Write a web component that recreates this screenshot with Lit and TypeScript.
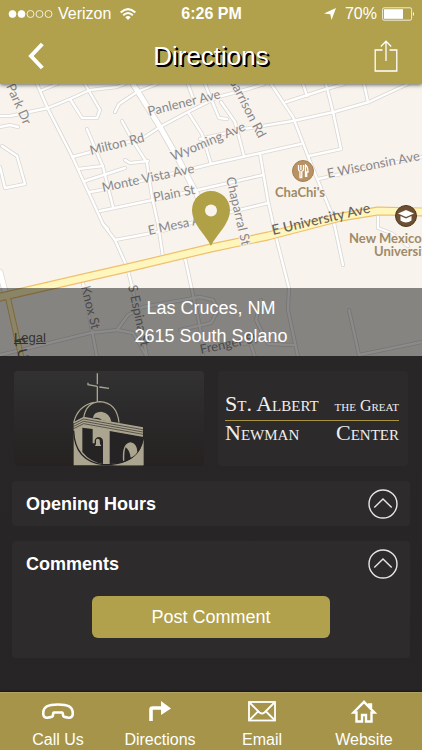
import { LitElement, html, svg, css } from "lit";
import { customElement, property, state } from "lit/decorators.js";

const minorRoads = [
  "M37 84L48 109L72 156L103 224L115 240L127 267L133 290L147 356",
  "M103 224L108 229",
  "M0 116L10 116L48 108L70 99L90 90L117 87L125 84",
  "M40 91L57 84",
  "M70 99L82 118L97 118L100 110L85 84",
  "M115 112L119 104L137 92L157 84",
  "M72 157L143 138L160 127L188 112L218 97L248 89L264 84",
  "M87 129L103 167L113 207",
  "M122 121L133 141L147 163L152 197L158 224L163 257",
  "M125 160L130 163L148 161",
  "M78 169L103 166",
  "M85 181L125 168",
  "M90 192L107 189L191 169L211 164L301 144",
  "M100 211L153 200L211 187L263 175",
  "M115 240L158 232L231 212L268 203",
  "M2 146L17 156L25 184L5 188L0 167",
  "M0 127L10 125L18 127",
  "M188 84L193 98M188 112L202 134L211 164",
  "M205 84L219 118L227 119M221 102L235 122L244 156",
  "M271 84L293 117L311 164L331 212",
  "M200 139L244 129L293 121L334 112L369 102L408 84",
  "M286 102L326 89L344 84",
  "M303 84L307 96",
  "M326 84L333 112L341 149L309 156",
  "M364 84L368 102",
  "M260 154L268 201L276 237L289 288L288 310L298 357",
  "M318 179L422 157",
  "M378 216L378 228L391 233L408 246",
  "M334 223L343 265",
  "M83 283L97 357",
  "M185 258L200 327L203 357",
  "M0 355L90 333L117 330L128 315L143 307L200 297L213 300L218 310L211 323L180 330",
  "M117 330L133 333L147 357",
  "M203 350L256 342",
  "M261 300L256 320L268 344L294 345M250 342L255 357",
  "M349 310L359 355L422 342",
];
const wideRoads = ["M133 84L160 127L180 162L211 222", "M0 272L6 295"];
const avenue =
  "M-4 298L83 278L127 268L211 248L268 236L341 217L378 211L426 212";
const sideAvenue = "M8 298L22 360";

type Label = { t: string; x: number; y: number; r: number; c: string };
const labels: Label[] = [
  { t: "Park Dr", x: 6, y: 86, r: 66, c: "st" },
  { t: "Panlener Ave", x: 149, y: 116, r: -14, c: "st" },
  { t: "Milton Rd", x: 91, y: 155, r: -14, c: "st" },
  { t: "Wyoming Ave", x: 173, y: 161, r: -23, c: "st" },
  { t: "Monte Vista Ave", x: 103, y: 192, r: -12, c: "st" },
  { t: "Plain St", x: 154, y: 202, r: -11, c: "st" },
  { t: "E Mesa Ave", x: 149, y: 235, r: -12, c: "st" },
  { t: "Garrison Rd", x: 228, y: 79, r: 63, c: "st" },
  { t: "Chaparral St", x: 226, y: 178, r: 77, c: "st" },
  { t: "E Wisconsin Ave", x: 328, y: 178, r: -11, c: "st" },
  { t: "E University Ave", x: 273, y: 235, r: -13, c: "st major" },
  { t: "Knox St", x: 81, y: 287, r: 76, c: "st" },
  { t: "S Espina St", x: 128, y: 286, r: 78, c: "st" },
  { t: "Frenger St", x: 201, y: 354, r: -12, c: "st" },
  { t: "E Union Ave", x: 14, y: 339, r: 76, c: "st major" },
  { t: "ChaChi's", x: 275, y: 197, r: 0, c: "place" },
  { t: "New Mexico", x: 349, y: 243, r: 0, c: "place" },
  { t: "University", x: 374, y: 256, r: 0, c: "place" },
];

@customElement("street-map")
class StreetMap extends LitElement {
  static styles = css`
    :host { display: block; position: relative; overflow: hidden; height: 272px; background: #f8f4ed; }
    .map { display: block; width: 100%; height: 100%; }
    .casing, .fill { fill: none; stroke-linejoin: round; stroke-linecap: round; }
    .casing { stroke: #dad7d3; stroke-width: 4; }
    .fill { stroke: #fff; stroke-width: 2.4; }
    .wide.casing { stroke-width: 6.6; }
    .wide.fill { stroke-width: 5; }
    .avenue.casing { stroke: #efc06c; stroke-width: 9; }
    .avenue.fill { stroke: #fff6bd; stroke-width: 6.6; }
    .side.casing { stroke: #efc06c; stroke-width: 6; }
    .side.fill { stroke: #fff6bd; stroke-width: 4; }
    text { font-family: Lato, "Noto Sans", sans-serif; }
    .st { font-size: 13px; fill: #88878b; stroke: #f8f4ed; stroke-width: 2; paint-order: stroke; }
    .major { font-size: 14px; fill: #66635f; font-weight: 500; stroke: none; }
    .place { font-size: 13px; font-weight: 700; fill: #a18a66; stroke: #f8f4ed; stroke-width: 2; paint-order: stroke; }
    .address {
      position: absolute; left: 0; right: 0; bottom: 0; box-sizing: border-box;
      padding: 6px 0; background: rgba(0, 0, 0, 0.46); color: #fff;
      font-style: normal; font-size: 18px; line-height: 28px; text-align: center;
    }
    .legal { position: absolute; left: 14px; bottom: 10px; font-size: 13px; line-height: 16px; color: #333; }
  `;
  render() {
    const road = (d: string, c: string) => svg`<path class=${c} d=${d}></path>`;
    return html`
      <svg class="map" viewBox="0 84 422 272" preserveAspectRatio="xMidYMid slice" role="img" aria-label="Street map">
        ${minorRoads.map((d) => road(d, "casing"))}
        ${wideRoads.map((d) => road(d, "wide casing"))}
        ${minorRoads.map((d) => road(d, "fill"))}
        ${wideRoads.map((d) => road(d, "wide fill"))}
        ${road(sideAvenue, "side casing")} ${road(avenue, "avenue casing")}
        ${road(sideAvenue, "side fill")} ${road(avenue, "avenue fill")}
        ${labels.map((l) => svg`<text class=${l.c} transform="translate(${l.x} ${l.y}) rotate(${l.r})">${l.t}</text>`)}
        <circle cx="303" cy="171" r="10.5" fill="#b99263" stroke="#a57f52"></circle>
        <path d="M298.5 165v4q0 2 1.500 2.300v6.200h1.800v-6.200q1.700-.3 1.700-2.300v-4M300.900 165v5M305.500 177v-12q2.500 1.500 2.500 7h-1.300v5" fill="none" stroke="#fff" stroke-width="1.300"></path>
        <circle cx="406" cy="216" r="10.500" fill="#6d4f33" stroke="#50371f"></circle>
        <path d="M398 213.500l8-3.500 8 3.500-8 3.500z" fill="#fff"></path>
        <path d="M400.500 216v4.500q5.500 4 11 0V216l-5.500 2.600z" fill="#fff"></path>
        <path fill="#b0a046" d="M211 246C206 235 192 224 192 210A19 19 0 0 1 230 210C230 224 216 235 211 246Z"></path>
        <circle cx="211" cy="210.500" r="6" fill="#f8f4ed"></circle>
      </svg>
      <address class="address">Las Cruces, NM<br />2615 South Solano</address>
      <a class="legal" href="#legal">Legal</a>
    `;
  }
}

@customElement("fold-section")
class FoldSection extends LitElement {
  @property() heading = "";
  @property({ type: Boolean }) filled = false;
  @state() private open = true;
  static styles = css`
    :host { display: block; background: #2d2b2c; border-radius: 4px; }
    h2 { margin: 0; }
    .toggle {
      display: flex; align-items: center; justify-content: space-between;
      width: 100%; height: 45px; padding: 0 12px 0 14px; border: 0; background: none;
      color: #fff; font: 700 18px/24px "Liberation Sans", Arial, sans-serif; text-align: left;
    }
    .closed { transform: rotate(180deg); }
    .content { padding: 10px 80px 20px; }
  `;
  render() {
    return html`
      <h2>
        <button class="toggle" aria-expanded=${String(this.open)} @click=${() => (this.open = !this.open)}>
          ${this.heading}
          <svg class=${this.open ? "" : "closed"} width="30" height="30" viewBox="0 0 30 30" fill="none" stroke="#e6e6e6" stroke-width="1.400" aria-hidden="true">
            <circle cx="15" cy="15" r="14"></circle>
            <path d="M6.300 18.500L15 10l8.700 8.500"></path>
          </svg>
        </button>
      </h2>
      ${this.filled && this.open ? html`<div class="content"><slot></slot></div>` : ""}
    `;
  }
}

const tabs = [
  {
    name: "Call Us",
    icon: svg`<path d="M6.500 17.500C3 18.500 1.200 16.500 1.200 13.500C1.200 6.500 6 4.500 16 4.500S30.800 6.500 30.800 13.500C30.800 16.500 29 18.500 25.500 17.500C22.500 16.800 21 17.500 21 15C21 13.500 20.800 12.500 20 12.500H12C11.200 12.500 11 13.500 11 15C11 17.500 9.500 16.800 6.500 17.500Z" fill="none" stroke="#fff" stroke-width="2.600"></path>`,
  },
  {
    name: "Directions",
    icon: svg`<path d="M7 21V9.500Q7 8 8.500 8H17" fill="none" stroke="#fff" stroke-width="3.600"></path><path d="M17 1L27 8.500L17 15Z" fill="#fff"></path>`,
  },
  {
    name: "Email",
    icon: svg`<g fill="none" stroke="#fff" stroke-width="1.800"><rect x="3" y="2" width="26" height="18.500"></rect><path d="M4 3L13.500 12.500Q16 14.500 18.500 12.500L28 3M4 19.500L12 11.500M28 19.500L20 11.500"></path></g>`,
  },
  {
    name: "Website",
    icon: svg`<path d="M16 1.800L5.500 12.500H8.500V21.500H14V15H18V21.500H23.500V12.500H26.500L23 9V4.500H21V7Z" fill="none" stroke="#fff" stroke-width="2.400"></path>`,
  },
];

@customElement("app-root")
class AppRoot extends LitElement {
  static styles = css`
    :host {
      display: flex; flex-direction: column; min-height: 100vh;
      background: linear-gradient(#2a2829, #272425);
      color: #fff; font-family: "Liberation Sans", Arial, sans-serif;
    }
    .top { position: relative; z-index: 1; background: #b1a14c; box-shadow: 0 1px 4px rgba(0, 0, 0, 0.6); }
    .status {
      display: grid; grid-template-columns: 1fr auto 1fr; align-items: center;
      height: 28px; padding: 0 7px 0 8px; font-size: 16px; line-height: 20px;
    }
    .carrier, .power { display: flex; align-items: center; gap: 5px; }
    .power { justify-content: flex-end; }
    .power .arrow { margin-right: 4px; }
    .carrier .wifi { margin-left: 4px; }
    .clock { font-weight: 700; }
    .bar {
      display: grid; grid-template-columns: 48px 1fr 48px; align-items: center;
      height: 56px; padding: 0 12px; box-sizing: border-box;
    }
    .icon-button { display: flex; align-items: center; justify-content: center; width: 48px; height: 48px; padding: 0; border: 0; background: none; }
    h1 { margin: 0; font-size: 26px; font-weight: 400; line-height: 32px; text-align: center; text-shadow: 1px 1px 0 #000, 2px 2px 0 #000; }
    .page { display: flex; flex-direction: column; gap: 15px; padding: 15px 12px; }
    .brand { display: grid; grid-template-columns: 1fr 1fr; gap: 14px; padding: 0 2px; }
    .card { display: flex; align-items: center; justify-content: center; height: 95px; border-radius: 4px; }
    .mark { background: linear-gradient(#323232, #2a2828 55%, #262222); }
    .wordmark { flex-direction: column; align-items: stretch; padding: 0 9px 0 7px; box-sizing: border-box; background: #2c2a2b; font-family: "Liberation Serif", serif; font-variant: small-caps; color: #f0eff0; }
    .line { display: flex; justify-content: space-between; align-items: baseline; font-size: 22px; line-height: 24px; white-space: nowrap; }
    .line.first { border-bottom: 1px solid #a8933c; padding-bottom: 2px; }
    .small { font-size: 16px; }
    .post { width: 100%; height: 42px; padding: 0; border: 0; border-radius: 6px; background: #b1a14c; color: #fff; font: 18px/24px "Liberation Sans", Arial, sans-serif; }
    .tabs {
      display: grid; grid-template-columns: repeat(4, 1fr); margin-top: auto; padding: 7px 7px 0;
      background: #a59449; border-top: 1px solid #b3a465; box-shadow: 0 0 2px #000;
    }
    .tab { display: flex; flex-direction: column; align-items: center; gap: 6px; color: #fff; font-size: 16px; line-height: 20px; text-decoration: none; }
  `;
  render() {
    return html`
      <header class="top">
        <div class="status">
          <div class="carrier">
            <svg width="45" height="10" viewBox="0 0 45 10" fill="none" stroke="#fff" stroke-width=".8" aria-label="Signal 2 of 5">
              ${[0, 1, 2, 3, 4].map((i) => svg`<circle cx=${4.5 + i * 9} cy="5" r="3.500" fill=${i < 2 ? "#fff" : "none"}></circle>`)}
            </svg>
            <span>Verizon</span>
            <svg class="wifi" width="16" height="12" viewBox="0 0 16 12" fill="none" stroke="#fff" stroke-width="2" aria-label="Wi-Fi">
              <path d="M.7 4.500Q8-2.200 15.300 4.500M3.200 7.300Q8 2.800 12.800 7.300"></path>
              <path d="M8 12L5.300 9.200Q8 7 10.700 9.200Z" fill="#fff" stroke="none"></path>
            </svg>
          </div>
          <span class="clock">6:26 PM</span>
          <div class="power">
            <svg class="arrow" width="12" height="12" viewBox="0 0 12 12" aria-label="Location in use"><path d="M12 0L7.500 12L6.300 6.300L0 5.500Z" fill="#fff"></path></svg>
            <span>70%</span>
            <svg width="33" height="14" viewBox="0 0 33 14" aria-label="Battery">
              <rect x=".6" y=".8" width="29" height="12.400" rx="1.500" fill="none" stroke="#fff" stroke-width=".8"></rect>
              <rect x="2" y="2.200" width="19" height="9.600" fill="#fff"></rect>
              <path d="M31 4.800Q33 7 31 9.200Z" fill="#fff"></path>
            </svg>
          </div>
        </div>
        <nav class="bar" aria-label="Page">
          <button class="icon-button" aria-label="Back">
            <svg width="16" height="28" viewBox="0 0 16 28" fill="none" stroke="#fff" stroke-width="4"><path d="M14.300 2L3 14L14.300 26"></path></svg>
          </button>
          <h1>Directions</h1>
          <button class="icon-button" aria-label="Share">
            <svg width="24" height="32" viewBox="0 0 24 32" fill="none" stroke="#fff" stroke-width="1.300"><path d="M8.500 10H1.200V31H22.800V10H15.500M12 21V1.500M6.800 6.500L12 1.200L17.200 6.500"></path></svg>
          </button>
        </nav>
      </header>
      <street-map></street-map>
      <main class="page">
        <section class="brand">
          <div class="card mark">
            <svg width="73" height="95" viewBox="218 33 219 285" role="img" aria-label="Church with dome and bell arch">
              <g fill="none" stroke="#aba58f" stroke-width="4">
                <path d="M291 40V73M291 79V125M263 68V74L291 79M297 81L326 85"></path>
                <path d="M220 188Q232 138 280 127M250 173Q258 127 298 125Q350 128 356 188" stroke-width="3.500"></path>
              </g>
              <path d="M278 174Q280 155 303 155Q330 160 333 186L305 181Q298 170 278 174Z" fill="#aba58f"></path>
              <path d="M220 186L250 170L428 202V230L250 196L220 210Z" fill="#aba58f"></path>
              <path d="M220 208L250 194L428 229V316H220Z" fill="#aba58f"></path>
              <path d="M220 192L250 177L428 209M220 199L250 184L428 216M220 206L250 191L428 223" fill="none" stroke="#2a2828" stroke-width="2"></path>
              <path d="M246 203L277 207V250H283V242Q286 231 296 231Q308 233 308 245V312Q270 306 246 276Z" fill="#262324"></path>
              <path d="M328 213L430 231Q427 312 328 312Z" fill="#262324"></path>
              <path d="M430 236Q419 302 340 316H430Z" fill="#aba58f"></path>
              <path d="M220 212Q223 302 308 314H328Q414 306 428 238" fill="none" stroke="#262324" stroke-width="4"></path>
              <path d="M287 239Q292 234 298 239L299 252L303 258H284L287 252Z" fill="#aba58f"></path>
              <path d="M368 303Q364 249 391 247Q410 250 411 276Q404 289 391 293Q388 270 376 262Q371 274 372 302Z" fill="#aba58f"></path>
            </svg>
          </div>
          <div class="card wordmark">
            <div class="line first"><span>St. Albert</span><span class="small">the Great</span></div>
            <div class="line"><span>Newman</span><span>Center</span></div>
          </div>
        </section>
        <fold-section heading="Opening Hours"></fold-section>
        <fold-section heading="Comments" filled><button class="post">Post Comment</button></fold-section>
      </main>
      <nav class="tabs" aria-label="Contact">
        ${tabs.map((t) => html`<a class="tab" href="#"><svg width="32" height="24" viewBox="0 0 32 24" aria-hidden="true">${t.icon}</svg>${t.name}</a>`)}
      </nav>
    `;
  }
}
